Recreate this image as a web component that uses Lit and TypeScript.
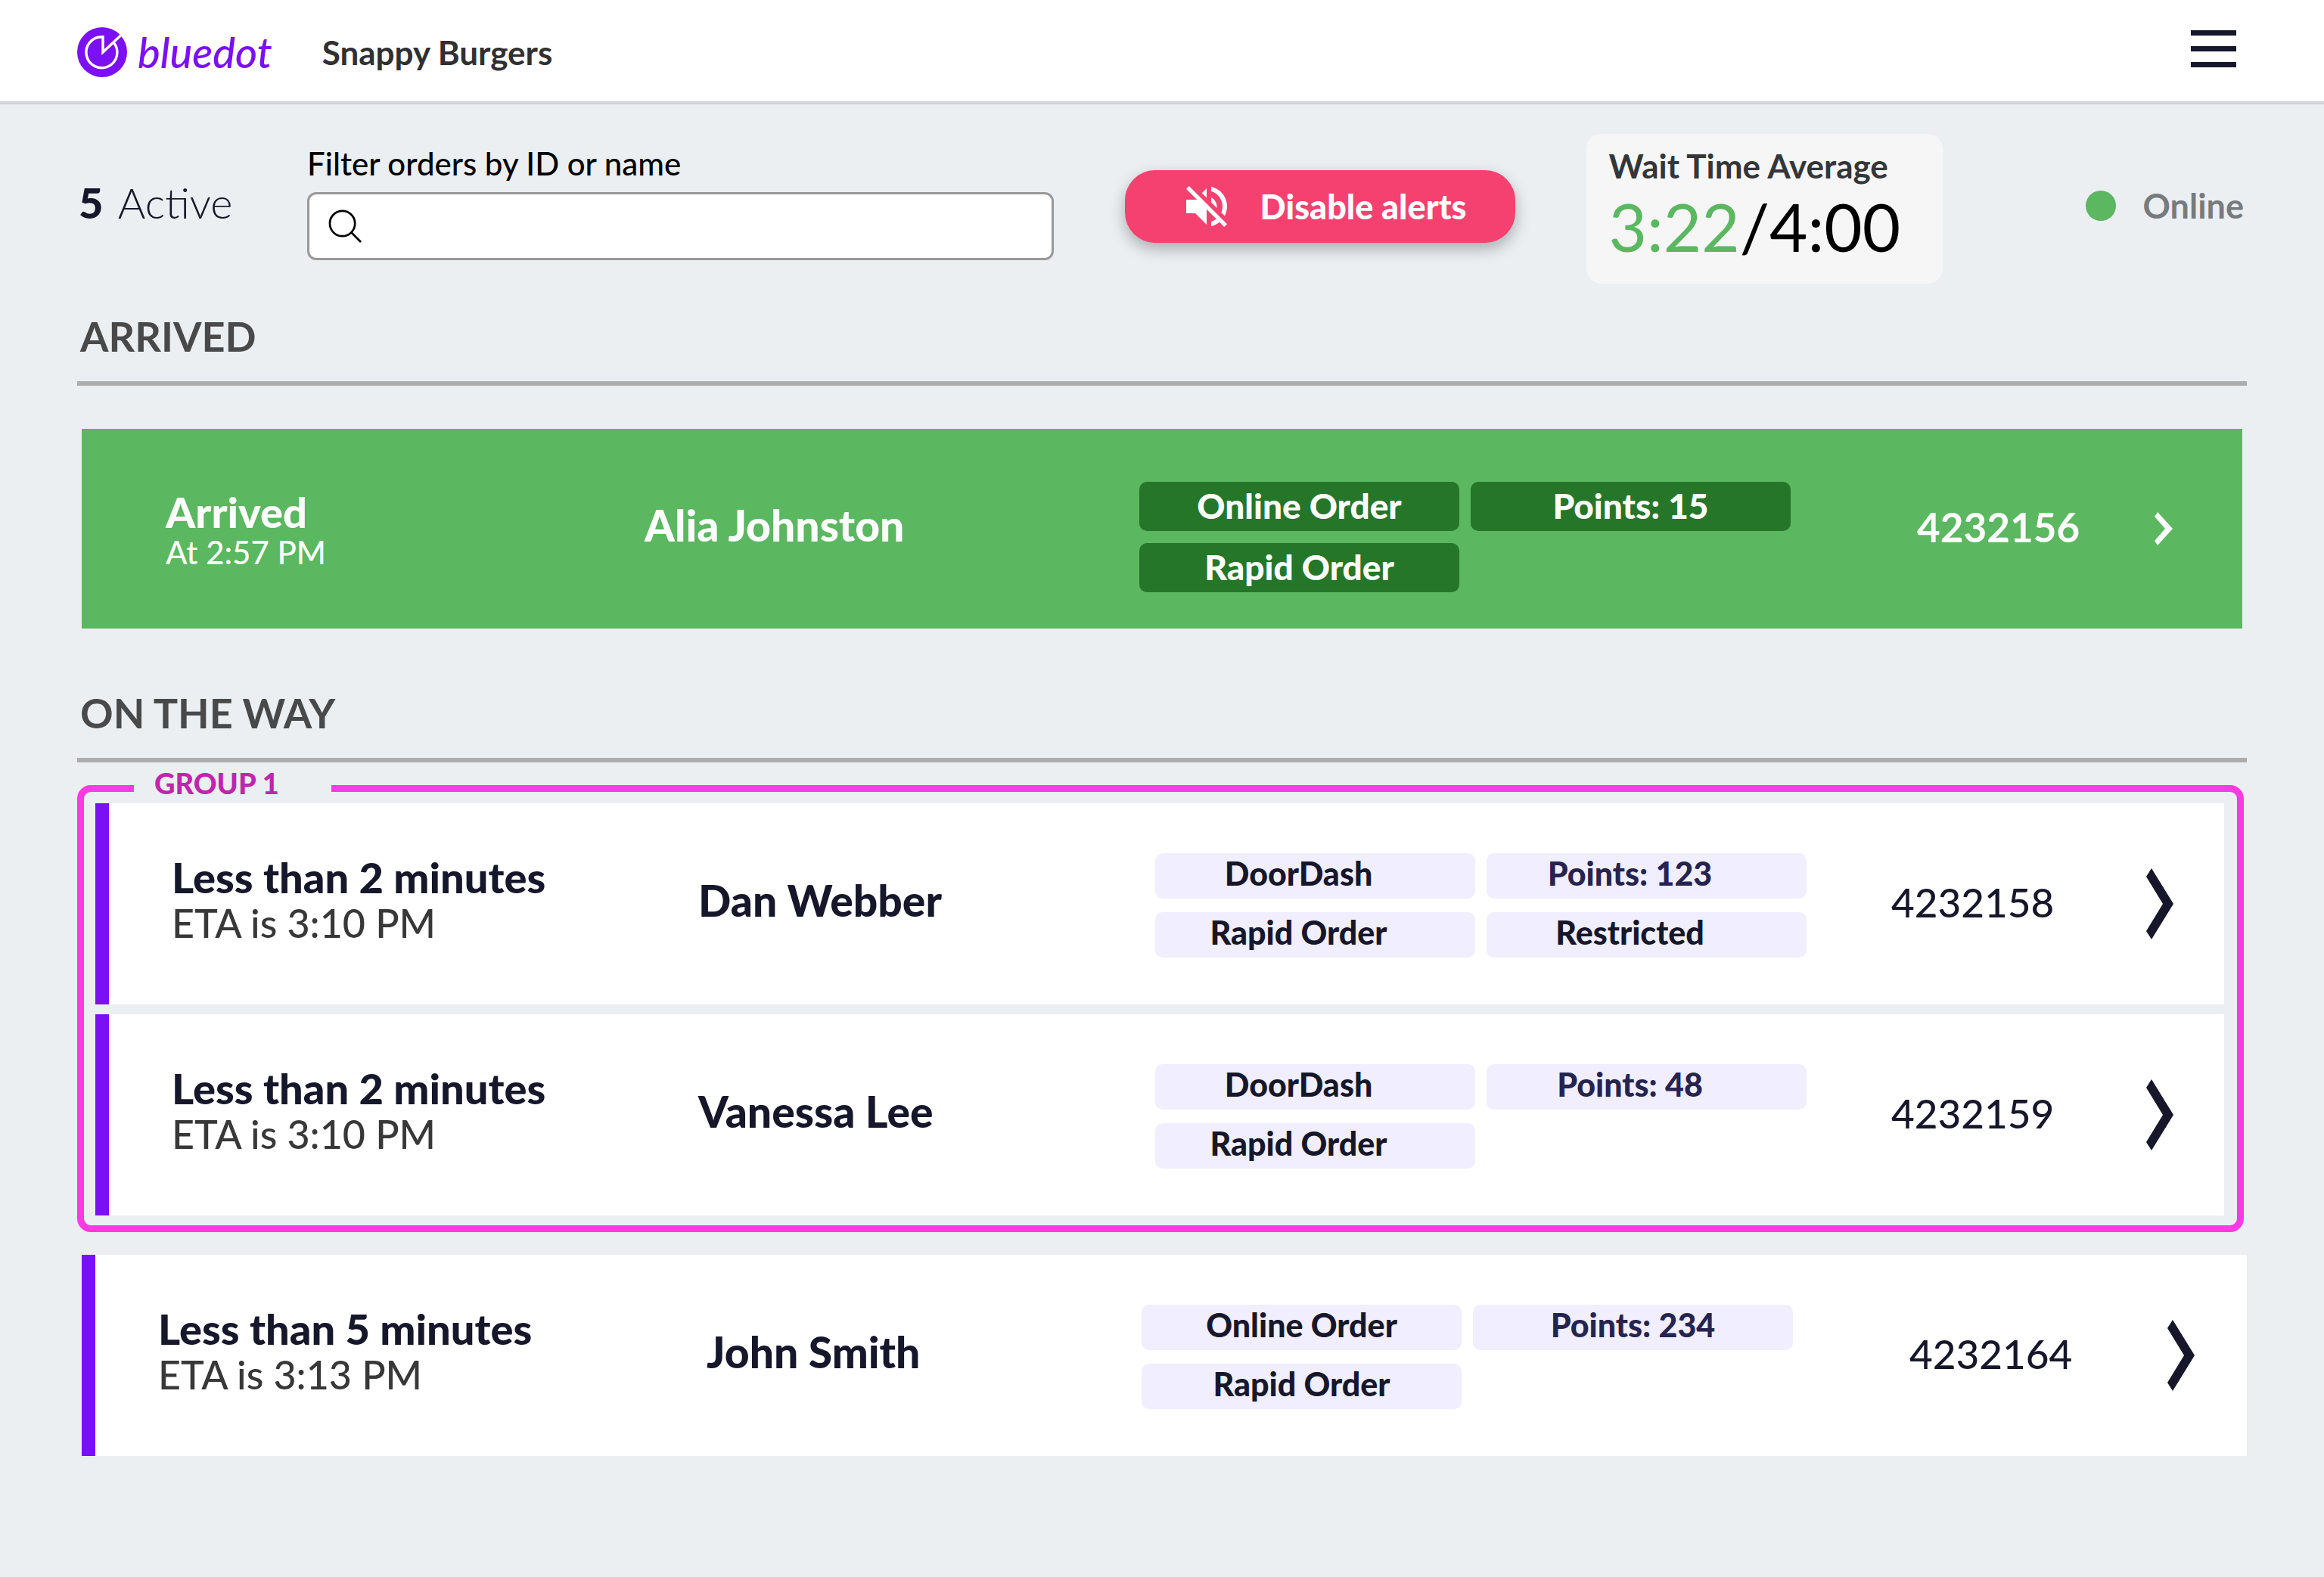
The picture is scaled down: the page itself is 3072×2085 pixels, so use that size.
import { LitElement, html, css } from "lit";
import { customElement, property } from "lit/decorators.js";

interface Tag {
  label: string;
  soft?: boolean;
}

interface Order {
  status: string;
  time: string;
  name: string;
  tags: Tag[];
  id: string;
}

const ARRIVED: Order[] = [
  {
    status: "Arrived",
    time: "At 2:57 PM",
    name: "Alia Johnston",
    tags: [{ label: "Online Order" }, { label: "Points: 15" }, { label: "Rapid Order" }],
    id: "4232156",
  },
];

const GROUPED: Order[] = [
  {
    status: "Less than 2 minutes",
    time: "ETA is 3:10 PM",
    name: "Dan Webber",
    tags: [
      { label: "DoorDash" },
      { label: "Points: 123", soft: true },
      { label: "Rapid Order" },
      { label: "Restricted" },
    ],
    id: "4232158",
  },
  {
    status: "Less than 2 minutes",
    time: "ETA is 3:10 PM",
    name: "Vanessa Lee",
    tags: [{ label: "DoorDash" }, { label: "Points: 48", soft: true }, { label: "Rapid Order" }],
    id: "4232159",
  },
];

const SINGLE: Order[] = [
  {
    status: "Less than 5 minutes",
    time: "ETA is 3:13 PM",
    name: "John Smith",
    tags: [{ label: "Online Order" }, { label: "Points: 234", soft: true }, { label: "Rapid Order" }],
    id: "4232164",
  },
];

@customElement("order-row")
export class OrderRow extends LitElement {
  @property({ attribute: false }) order!: Order;
  @property({ reflect: true }) variant: "arrived" | "grouped" | "single" = "single";

  static styles = css`
    :host {
      display: block;
      font-family: Lato, "Open Sans", sans-serif;
      color: #17172b;
    }
    .row {
      display: grid;
      align-items: center;
      box-sizing: border-box;
      min-height: 266px;
      background: #fff;
      border-left: 18px solid #7b10f5;
    }
    :host([variant="grouped"]) .row {
      grid-template-columns: 696fr 604fr 973fr 337fr 36px;
      padding: 0 67px 0 83px;
    }
    :host([variant="single"]) .row {
      grid-template-columns: 725fr 575fr 1015fr 341fr 36px;
      padding: 0 69px 0 83px;
    }
    :host([variant="arrived"]) .row {
      grid-template-columns: 633fr 654fr 1028fr 314fr 24px;
      min-height: 264px;
      padding: 0 92px 0 111px;
      border-left: 0;
      background: #5bb760;
      color: #fff;
    }
    .eta,
    .name {
      padding-bottom: 10px;
    }
    .status {
      font-size: 56px;
      line-height: 60px;
      font-weight: 900;
    }
    .time {
      font-size: 52px;
      line-height: 60px;
      font-weight: 500;
      color: #383838;
    }
    .name {
      font-size: 57px;
      line-height: 60px;
      font-weight: 900;
    }
    .id {
      padding-bottom: 4px;
      font-size: 53px;
      line-height: 60px;
      font-weight: 500;
    }
    :host([variant="arrived"]) .eta {
      padding: 4px 0 0;
    }
    :host([variant="arrived"]) .status {
      line-height: 58px;
    }
    :host([variant="arrived"]) .time {
      font-size: 42px;
      line-height: 48px;
      color: #fff;
    }
    :host([variant="arrived"]) .id {
      font-weight: 700;
    }
    .tags {
      display: grid;
      grid-template-columns: repeat(2, minmax(0, 423px));
      gap: 18px 15px;
      margin: 0;
      padding: 4px 0 0;
      list-style: none;
    }
    .tag {
      box-sizing: border-box;
      height: 60px;
      border-radius: 10px;
      background: #f0eeff;
      font-size: 43px;
      line-height: 54px;
      font-weight: 900;
      text-align: center;
    }
    .soft {
      color: #26244f;
    }
    :host([variant="grouped"]) .tag {
      padding-right: 44px;
    }
    :host([variant="arrived"]) .tags {
      gap: 16px 15px;
      padding-top: 22px;
    }
    :host([variant="arrived"]) .tag {
      height: 65px;
      line-height: 64px;
      font-size: 46px;
      background: #267629;
    }
    .open {
      display: block;
      padding: 0;
      border: 0;
      background: none;
      color: inherit;
      cursor: pointer;
    }
    .chevron {
      display: block;
      width: 100%;
      fill: currentColor;
    }
  `;

  render() {
    const o = this.order;
    return html`
      <article class="row">
        <div class="eta">
          <div class="status">${o.status}</div>
          <div class="time">${o.time}</div>
        </div>
        <div class="name">${o.name}</div>
        <ul class="tags">
          ${o.tags.map((t) => html`<li class="tag ${t.soft ? "soft" : ""}">${t.label}</li>`)}
        </ul>
        <div class="id">${o.id}</div>
        <button class="open" type="button" aria-label="Open order ${o.id}">
          ${this.variant === "arrived"
            ? html`<svg class="chevron" viewBox="0 0 24 44"><path d="M4 0 24 22 4 44 0 38 14 22 0 6Z" /></svg>`
            : html`<svg class="chevron" viewBox="0 0 36 94"><path d="M7 0 36 47 7 94 0 83 22 47 0 11Z" /></svg>`}
        </button>
      </article>
    `;
  }
}

@customElement("app-root")
export class AppRoot extends LitElement {
  static styles = css`
    :host {
      display: block;
      min-height: 100vh;
      background: #ebeff2;
      font-family: Lato, "Open Sans", sans-serif;
      color: #17172b;
    }
    .header {
      display: flex;
      align-items: center;
      height: 130px;
      padding: 4px 116px 0 102px;
      background: #fff;
      border-bottom: 4px solid #d2d3da;
    }
    .logo {
      display: flex;
      align-items: center;
      gap: 14px;
      color: #7b10f5;
      text-decoration: none;
    }
    .mark {
      display: block;
      width: 66px;
      height: 66px;
    }
    .wordmark {
      font-size: 56px;
      line-height: 60px;
      font-style: italic;
      font-weight: 500;
    }
    .store {
      margin-left: 66px;
      font-size: 44px;
      line-height: 48px;
      font-weight: 700;
      color: #303030;
    }
    .menu {
      display: grid;
      gap: 14px;
      margin-left: auto;
      padding: 0 0 10px;
      border: 0;
      background: none;
      cursor: pointer;
    }
    .bar {
      width: 60px;
      height: 7px;
      background: #17172b;
    }
    .main {
      padding: 39px 102px 120px;
    }
    .toolbar {
      display: flex;
      align-items: center;
      gap: 94px;
    }
    .search {
      display: flex;
      align-items: center;
      flex: 1;
      min-width: 0;
      padding-bottom: 16px;
    }
    .count {
      width: 302px;
      padding-left: 2px;
      font-size: 56px;
      line-height: 60px;
      font-weight: 300;
    }
    .count b {
      font-weight: 900;
      margin-right: 6px;
    }
    .filter {
      flex: 1;
      min-width: 0;
    }
    .label {
      display: block;
      margin-bottom: 14px;
      font-size: 42px;
      line-height: 48px;
      font-weight: 500;
      color: #000;
    }
    .field {
      display: flex;
      align-items: center;
      gap: 16px;
      box-sizing: border-box;
      height: 90px;
      padding: 0 25px;
      border: 3px solid #999;
      border-radius: 12px;
      background: #fff;
    }
    .glass {
      width: 45px;
      height: 45px;
      flex: none;
    }
    .input {
      flex: 1;
      min-width: 0;
      border: 0;
      outline: 0;
      background: none;
      font: inherit;
      font-size: 42px;
    }
    .alerts {
      display: flex;
      align-items: center;
      gap: 44px;
      box-sizing: border-box;
      width: 516px;
      height: 96px;
      margin-bottom: 6px;
      padding: 0 0 0 81px;
      border: 0;
      border-radius: 40px;
      background: #f5416f;
      box-shadow: 0 8px 20px rgba(0, 0, 0, 0.28);
      color: #fff;
      font: inherit;
      font-size: 45px;
      font-weight: 900;
      white-space: nowrap;
      cursor: pointer;
    }
    .muted {
      flex: none;
      width: 54px;
      height: 54px;
      fill: #fff;
    }
    .wait {
      box-sizing: border-box;
      width: 471px;
      height: 198px;
      padding: 16px 30px;
      border-radius: 20px;
      background: #f6f6f6;
    }
    .wait-title {
      font-size: 44px;
      line-height: 52px;
      font-weight: 700;
      color: #343638;
    }
    .wait-value {
      font-size: 87px;
      line-height: 110px;
      color: #000;
    }
    .good {
      color: #5bb760;
    }
    .online {
      display: flex;
      align-items: center;
      gap: 36px;
      padding: 0 4px 8px 95px;
      font-size: 45px;
      line-height: 48px;
      font-weight: 700;
      color: #767b7e;
    }
    .dot {
      width: 40px;
      height: 40px;
      border-radius: 50%;
      background: #5bb760;
    }
    .heading {
      margin: 40px 0 57px;
      padding: 0 4px 29px;
      border-bottom: 6px solid #adadad;
      font-size: 54px;
      line-height: 60px;
      font-weight: 700;
      color: #494949;
    }
    .heading-next {
      margin: 82px 0 30px;
    }
    .arrived {
      margin: 0 6px;
    }
    .group {
      position: relative;
      display: grid;
      gap: 13px;
      margin: 0 4px 30px 0;
      padding: 15px 17px 13px 15px;
      border: 9px solid #f93be1;
      border-radius: 18px;
    }
    .group-name {
      position: absolute;
      top: -32px;
      left: 66px;
      box-sizing: border-box;
      width: 261px;
      padding-left: 27px;
      background: #ebeff2;
      font-size: 38px;
      line-height: 40px;
      font-weight: 900;
      color: #bf26ad;
    }
    .rest {
      margin-left: 6px;
    }
  `;

  private rows(orders: Order[], variant: string) {
    return orders.map((o) => html`<order-row .order=${o} variant=${variant}></order-row>`);
  }

  render() {
    return html`
      <header class="header">
        <a class="logo" href="#">
          <svg class="mark" viewBox="0 0 66 66" aria-hidden="true">
            <circle cx="33" cy="33" r="33" fill="#7b10f5" />
            <path
              d="M59 9.500 34 33V12.700H32.500A20.500 20.500 0 1 0 48.500 20.500"
              fill="none"
              stroke="#fff"
              stroke-width="3.400"
            />
          </svg>
          <span class="wordmark">bluedot</span>
        </a>
        <span class="store">Snappy Burgers</span>
        <button class="menu" type="button" aria-label="Menu">
          <span class="bar"></span><span class="bar"></span><span class="bar"></span>
        </button>
      </header>
      <main class="main">
        <div class="toolbar">
          <div class="search">
            <div class="count"><b>5</b> Active</div>
            <div class="filter">
              <label class="label" for="filter">Filter orders by ID or name</label>
              <div class="field">
                <svg class="glass" viewBox="0 0 46 46" fill="none" stroke="#000" stroke-width="2.800" aria-hidden="true">
                  <circle cx="19" cy="19" r="17" />
                  <path d="M31 31 44 44" />
                </svg>
                <input class="input" id="filter" type="text" />
              </div>
            </div>
          </div>
          <button class="alerts" type="button">
            <svg class="muted" viewBox="3 3 18 18" aria-hidden="true">
              <path
                d="M16.500 12c0-1.770-1.020-3.290-2.500-4.030v2.210l2.450 2.450c.03-.2.05-.41.05-.63zm2.500 0c0 .94-.2 1.820-.54 2.640l1.510 1.510C20.630 14.910 21 13.500 21 12c0-4.280-2.990-7.860-7-8.770v2.060c2.890.86 5 3.540 5 6.710zM4.270 3 3 4.270 7.730 9H3v6h4l5 5v-6.730l4.250 4.250c-.67.52-1.420.93-2.250 1.180v2.060c1.380-.31 2.630-.95 3.690-1.810L19.730 21 21 19.730l-9-9L4.270 3zM12 4 9.910 6.090 12 8.180V4z"
              />
            </svg>
            Disable alerts
          </button>
          <div class="wait">
            <div class="wait-title">Wait Time Average</div>
            <div class="wait-value"><span class="good">3:22</span>/4:00</div>
          </div>
          <div class="online"><span class="dot"></span>Online</div>
        </div>

        <h2 class="heading">ARRIVED</h2>
        <section class="arrived">${this.rows(ARRIVED, "arrived")}</section>

        <h2 class="heading heading-next">ON THE WAY</h2>
        <section class="group">
          <div class="group-name">GROUP 1</div>
          ${this.rows(GROUPED, "grouped")}
        </section>
        <section class="rest">${this.rows(SINGLE, "single")}</section>
      </main>
    `;
  }
}
